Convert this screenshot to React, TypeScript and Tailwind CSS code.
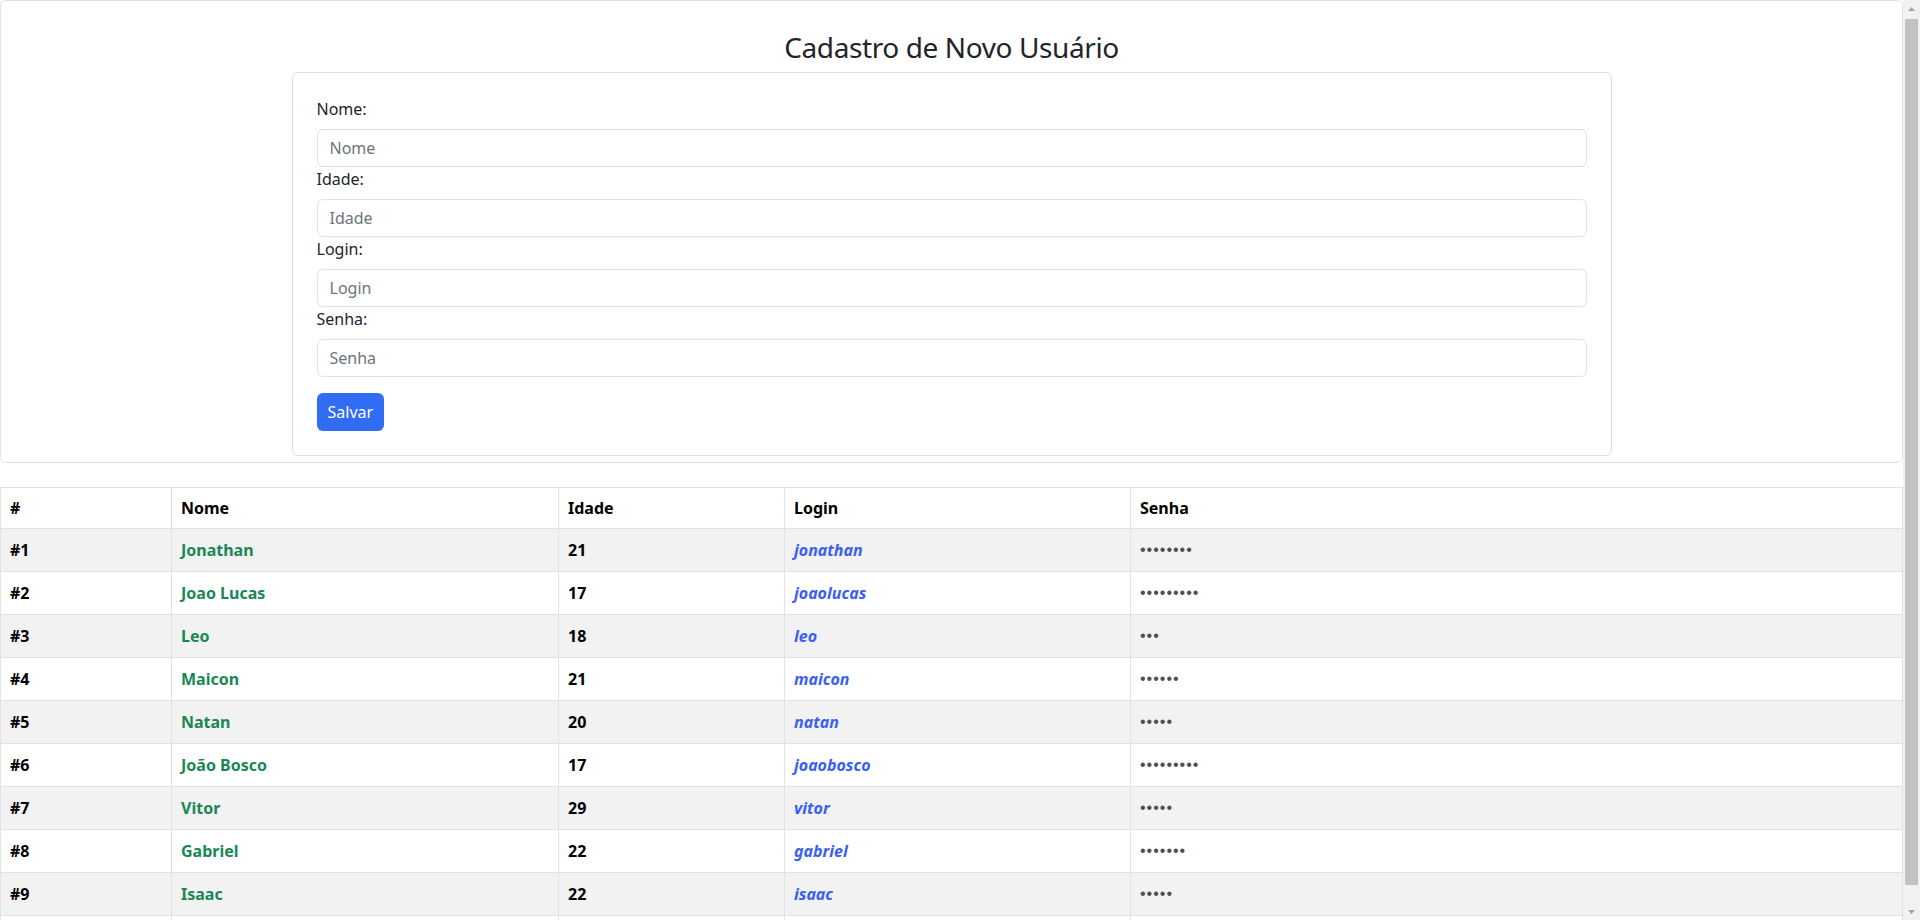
import React from "react";

type User = { id: number; nome: string; idade: number; login: string; senha: number };

const users: User[] = [
  { id: 1, nome: "Jonathan", idade: 21, login: "jonathan", senha: 8 },
  { id: 2, nome: "Joao Lucas", idade: 17, login: "joaolucas", senha: 9 },
  { id: 3, nome: "Leo", idade: 18, login: "leo", senha: 3 },
  { id: 4, nome: "Maicon", idade: 21, login: "maicon", senha: 6 },
  { id: 5, nome: "Natan", idade: 20, login: "natan", senha: 5 },
  { id: 6, nome: "João Bosco", idade: 17, login: "joaobosco", senha: 9 },
  { id: 7, nome: "Vitor", idade: 29, login: "vitor", senha: 5 },
  { id: 8, nome: "Gabriel", idade: 22, login: "gabriel", senha: 7 },
  { id: 9, nome: "Isaac", idade: 22, login: "isaac", senha: 5 },
  { id: 10, nome: "Pedro", idade: 19, login: "pedro", senha: 6 },
];

const fields = ["Nome", "Idade", "Login", "Senha"];

function Scrollbar() {
  return (
    <div className="w-[17px] shrink-0 h-screen bg-[#f1f1f1] flex flex-col">
      <div className="h-[17px] flex items-center justify-center">
        <svg width="7" height="4" viewBox="0 0 7 4">
          <polygon points="3.5,0 7,4 0,4" fill="#a3a3a3" />
        </svg>
      </div>
      <div className="mx-[2px] mt-[2px] h-[866px] bg-[#c1c1c1]" />
      <div className="flex-1" />
      <div className="h-[17px] flex items-center justify-center">
        <svg width="7" height="4" viewBox="0 0 7 4">
          <polygon points="0,0 7,0 3.5,4" fill="#a3a3a3" />
        </svg>
      </div>
    </div>
  );
}

export default function App() {
  return (
    <div className="flex h-screen overflow-hidden bg-white font-['Noto_Sans','Open_Sans',sans-serif] text-[16px] text-[#212529]">
      <div className="flex-1 min-w-0 h-screen overflow-hidden">
        <div className="border border-[#dee2e6] rounded-[6px] pt-[30px] pb-[6px]">
          <h3 className="text-[28px] leading-[1.2] font-normal text-center mb-[7px] tracking-[-0.4px]">
            Cadastro de Novo Usuário
          </h3>
          <div className="w-[1320px] mx-auto border border-[#dee2e6] rounded-[6px] p-6">
            <form onSubmit={(e) => e.preventDefault()}>
              {fields.map((f) => (
                <div key={f}>
                  <label className="block leading-6 mb-2">{f}:</label>
                  <input
                    type={f === "Senha" ? "password" : "text"}
                    placeholder={f}
                    className="block w-full h-[38px] px-3 py-1.5 leading-6 border border-[#dee2e6] rounded-[6px] text-[16px] placeholder:text-[#6c757d] outline-none"
                  />
                </div>
              ))}
              <button
                type="submit"
                className="mt-4 h-[38px] px-[11px] rounded-[6px] bg-[#316cf5] text-white leading-6"
              >
                Salvar
              </button>
            </form>
          </div>
        </div>

        <table className="mt-6 w-full table-fixed border-collapse border border-[#dee2e6] text-black">
          <colgroup>
            <col className="w-[171px]" />
            <col className="w-[387px]" />
            <col className="w-[226px]" />
            <col className="w-[346px]" />
            <col />
          </colgroup>
          <thead>
            <tr className="bg-white">
              {["#", "Nome", "Idade", "Login", "Senha"].map((h) => (
                <th key={h} className="border border-[#dee2e6] text-left font-bold px-[9px] py-2 leading-6">
                  {h}
                </th>
              ))}
            </tr>
          </thead>
          <tbody>
            {users.map((u, i) => (
              <tr key={u.id} className={i % 2 === 0 ? "bg-[#f2f2f2]" : "bg-white"}>
                <td className="border border-[#dee2e6] px-[9px] py-[9px] leading-6 font-bold">#{u.id}</td>
                <td className="border border-[#dee2e6] px-[9px] py-[9px] leading-6 font-bold text-[#198754]">{u.nome}</td>
                <td className="border border-[#dee2e6] px-[9px] py-[9px] leading-6 font-bold">{u.idade}</td>
                <td className="border border-[#dee2e6] px-[9px] py-[9px] leading-6 font-bold italic text-[#3a5ff5]">{u.login}</td>
                <td className="border border-[#dee2e6] px-[9px] py-[9px] leading-6 text-[#4b5056] font-['Liberation_Sans',sans-serif] tracking-[1px]">
                  {"•".repeat(u.senha)}
                </td>
              </tr>
            ))}
          </tbody>
        </table>
      </div>
      <Scrollbar />
    </div>
  );
}
